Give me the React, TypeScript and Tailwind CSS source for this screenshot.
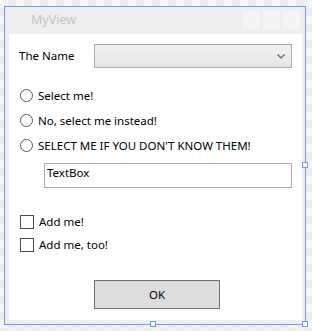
const font = { fontFamily: '"Segoe UI", "Noto Sans", "Open Sans", sans-serif' };

const Radio = ({ label }: { label: string }) => (
  <div className="flex items-center h-[13px]">
    <span className="w-[13px] h-[13px] rounded-full border border-[#5a5a5a] bg-white shrink-0" />
    <span className="ml-[5px] text-[11.5px] text-black leading-none">{label}</span>
  </div>
);

const Check = ({ label }: { label: string }) => (
  <div className="flex items-center h-[14px]">
    <span className="w-[14px] h-[14px] border border-[#4a4a4a] bg-white shrink-0" />
    <span className="ml-[5px] text-[11.5px] text-black leading-none">{label}</span>
  </div>
);

export default function App() {
  return (
    <div
      className="relative w-[312px] h-[331px] overflow-hidden pt-[6px] pl-[4px] bg-[repeating-conic-gradient(#ececec_0_25%,#f5f5f5_0_50%)] bg-[length:16px_16px]"
      style={font}
    >
      <div className="w-[302px] h-[319px] border border-[#6f9bec] bg-[#eeeeee] flex flex-col">
        {/* title bar */}
        <div className="h-[27px] flex items-center shrink-0">
          <span className="ml-[26px] text-[12.5px] text-[#c4c4c4]">MyView</span>
          <div className="ml-auto mr-[5px] flex gap-[3px] -mt-[1px]">
            <span className="w-[17px] h-[18px] bg-[#f5f5f5]" />
            <span className="w-[17px] h-[18px] bg-[#f5f5f5]" />
            <span className="w-[17px] h-[18px] bg-[#f5f5f5]" />
          </div>
        </div>
        {/* client area */}
        <div className="ml-[4px] mr-[3px] h-[286px] bg-white flex flex-col px-[10px] pt-[10px]">
          <div className="flex items-center h-[24px]">
            <span className="w-[75px] text-[11.5px] text-black">The Name</span>
            <div className="flex-1 h-[24px] border border-[#acacac] bg-gradient-to-b from-[#f0f0f0] to-[#e5e5e5] flex items-center justify-end pr-[6px]">
              <svg width="8" height="5" viewBox="0 0 8 5">
                <path d="M0.5 0.5 L4 4 L7.5 0.5" fill="none" stroke="#606060" strokeWidth="1.2" />
              </svg>
            </div>
          </div>
          <div className="mt-[21px] flex flex-col gap-[12px] ml-[1px]">
            <Radio label="Select me!" />
            <Radio label="No, select me instead!" />
            <Radio label="SELECT ME IF YOU DON'T KNOW THEM!" />
          </div>
          <div className="mt-[11px] ml-[25px] h-[25px] border border-[#abadb3] px-[2px] text-[11.5px] text-black leading-[18px]">
            TextBox
          </div>
          <div className="mt-[27px] flex flex-col gap-[9px] ml-[1px]">
            <Check label="Add me!" />
            <Check label="Add me, too!" />
          </div>
          <div className="mt-[28px] ml-[75px] w-[126px] h-[29px] border border-[#707070] bg-[#dddddd] flex items-center justify-center text-[11.5px] text-black">
            OK
          </div>
        </div>
      </div>
      {/* selection handles */}
      <span className="absolute left-[150px] top-[321px] w-[6px] h-[6px] border border-[#6f9bec] bg-white" />
      <span className="absolute left-[302px] top-[321px] w-[6px] h-[6px] border border-[#6f9bec] bg-white" />
      <span className="absolute left-[302px] top-[162px] w-[6px] h-[6px] border border-[#6f9bec] bg-white" />
    </div>
  );
}
